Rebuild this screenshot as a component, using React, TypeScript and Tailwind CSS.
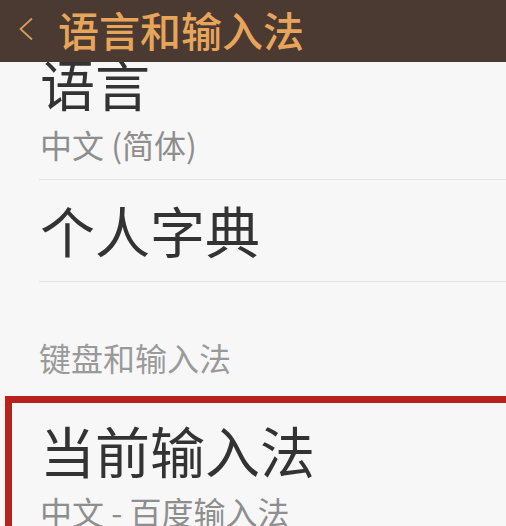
const cjk = { fontFamily: '"Noto Sans CJK SC", "Noto Sans", sans-serif' };

export default function App() {
  return (
    <div className="w-[506px] h-[526px] overflow-hidden bg-[#f7f7f7]" style={cjk}>
      {/* Title bar */}
      <header className="relative z-10 h-[62px] bg-[#4b3a31] flex items-center">
        <svg width="16" height="24" viewBox="0 0 16 24" className="ml-[18px] mt-[-4px]">
          <path d="M14 1.5 L2.5 12 L14 22.5" fill="none" stroke="#d39c5c" strokeWidth="1.8" />
        </svg>
        <h1 className="ml-[24px] mt-[-4px] text-[41px] leading-none font-medium text-[#e7a55c]">
          语言和输入法
        </h1>
      </header>

      {/* List, scrolled slightly */}
      <div className="mt-[-7px]">
        <div className="pl-[39px]">
          <div className="pb-[19px] border-b border-[#e4e4e4]">
            <div className="pl-[1px] text-[55px] leading-none text-[#333333]">语言</div>
            <div className="pl-[1px] mt-[18px] text-[32px] leading-none text-[#8e8e8e]">中文 (简体)</div>
          </div>
          <div className="pt-[22px] pb-[24px] border-b border-[#e4e4e4]">
            <div className="pl-[1px] text-[55px] leading-none text-[#333333]">个人字典</div>
          </div>
        </div>

        <div className="pl-[39px] pt-[59px] text-[32px] leading-none text-[#9a9a9a]">键盘和输入法</div>

        <div className="ml-[5px] mt-[23px] mr-[-40px] border-[7px] border-[#b6231a] pl-[28px] pt-[19px] pb-[20px]">
          <div className="text-[55px] leading-none text-[#333333]">当前输入法</div>
          <div className="mt-[18px] text-[32px] leading-none text-[#8e8e8e]">中文 - 百度输入法</div>
        </div>
      </div>
    </div>
  );
}
